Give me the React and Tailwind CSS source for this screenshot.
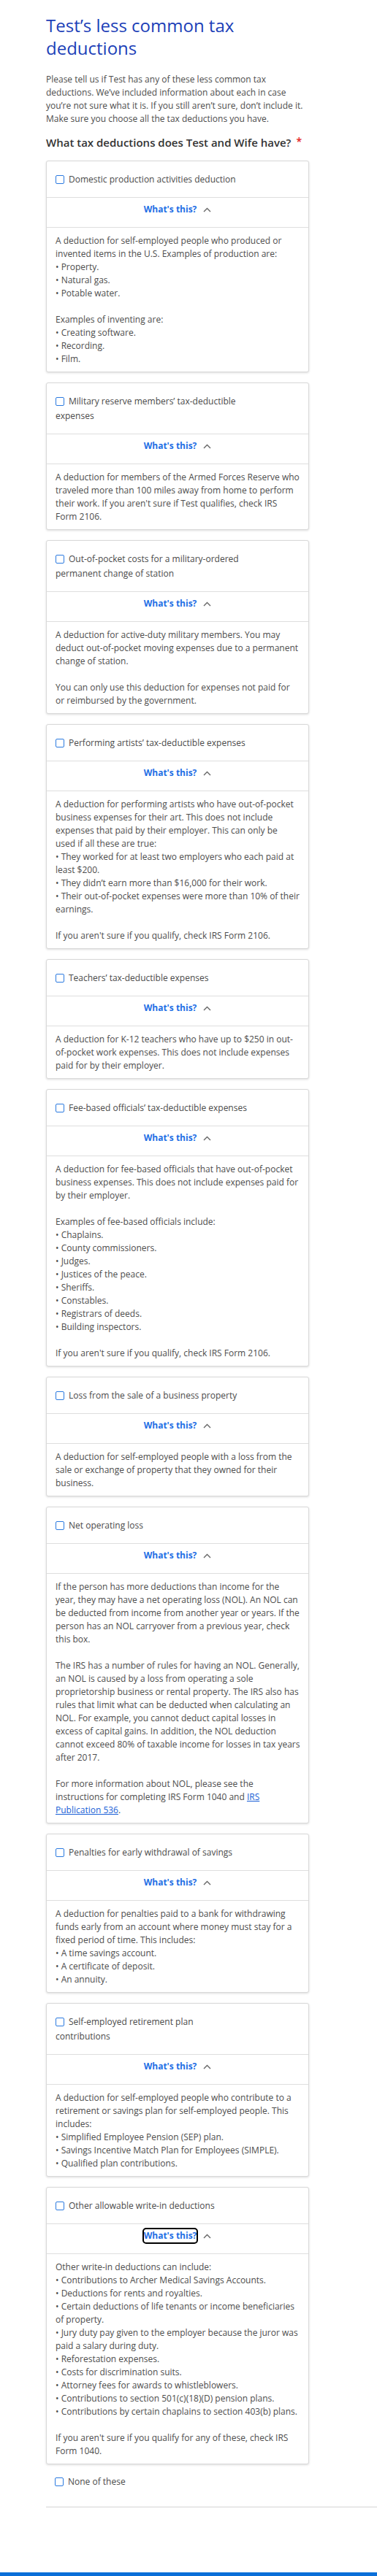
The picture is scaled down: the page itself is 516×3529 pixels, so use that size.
import React from 'react';

const deductions = [
  {
    label: 'Domestic production activities deduction',
    body: 'A deduction for self-employed people who produced or invented items in the U.S. Examples of production are:\n• Property.\n• Natural gas.\n• Potable water.\n\nExamples of inventing are:\n• Creating software.\n• Recording.\n• Film.',
  },
  {
    label: 'Military reserve members’ tax-deductible expenses',
    body: "A deduction for members of the Armed Forces Reserve who traveled more than 100 miles away from home to perform their work. If you aren't sure if Test qualifies, check IRS Form 2106.",
  },
  {
    label: 'Out-of-pocket costs for a military-ordered permanent change of station',
    body: 'A deduction for active-duty military members. You may deduct out-of-pocket moving expenses due to a permanent change of station.\n\nYou can only use this deduction for expenses not paid for or reimbursed by the government.',
  },
  {
    label: 'Performing artists’ tax-deductible expenses',
    body: "A deduction for performing artists who have out-of-pocket business expenses for their art. This does not include expenses that paid by their employer. This can only be used if all these are true:\n• They worked for at least two employers who each paid at least $200.\n• They didn’t earn more than $16,000 for their work.\n• Their out-of-pocket expenses were more than 10% of their earnings.\n\nIf you aren't sure if you qualify, check IRS Form 2106.",
  },
  {
    label: 'Teachers’ tax-deductible expenses',
    body: 'A deduction for K-12 teachers who have up to $250 in out-of-pocket work expenses. This does not include expenses paid for by their employer.',
  },
  {
    label: 'Fee-based officials’ tax-deductible expenses',
    body: "A deduction for fee-based officials that have out-of-pocket business expenses. This does not include expenses paid for by their employer.\n\nExamples of fee-based officials include:\n• Chaplains.\n• County commissioners.\n• Judges.\n• Justices of the peace.\n• Sheriffs.\n• Constables.\n• Registrars of deeds.\n• Building inspectors.\n\nIf you aren't sure if you qualify, check IRS Form 2106.",
  },
  {
    label: 'Loss from the sale of a business property',
    body: 'A deduction for self-employed people with a loss from the sale or exchange of property that they owned for their business.',
  },
  {
    label: 'Net operating loss',
    body: (
      <>
        {'If the person has more deductions than income for the year, they may have a net operating loss (NOL). An NOL can be deducted from income from another year or years. If the person has an NOL carryover from a previous year, check this box.\n\nThe IRS has a number of rules for having an NOL. Generally, an NOL is caused by a loss from operating a sole proprietorship business or rental property. The IRS also has rules that limit what can be deducted when calculating an NOL. For example, you cannot deduct capital losses in excess of capital gains. In addition, the NOL deduction '}
        <span className="whitespace-nowrap">cannot exceed 80% of taxable income for losses in tax years</span>
        {' after 2017.\n\nFor more information about NOL, please see the instructions for completing IRS Form 1040 and '}
        <span className="text-[#1a5fd6] underline">IRS Publication 536</span>.
      </>
    ),
  },
  {
    label: 'Penalties for early withdrawal of savings',
    body: 'A deduction for penalties paid to a bank for withdrawing funds early from an account where money must stay for a fixed period of time. This includes:\n• A time savings account.\n• A certificate of deposit.\n• An annuity.',
  },
  {
    label: 'Self-employed retirement plan contributions',
    body: 'A deduction for self-employed people who contribute to a retirement or savings plan for self-employed people. This includes:\n• Simplified Employee Pension (SEP) plan.\n• Savings Incentive Match Plan for Employees (SIMPLE).\n• Qualified plan contributions.',
  },
  {
    label: 'Other allowable write-in deductions',
    body: "Other write-in deductions can include:\n• Contributions to Archer Medical Savings Accounts.\n• Deductions for rents and royalties.\n• Certain deductions of life tenants or income beneficiaries of property.\n• Jury duty pay given to the employer because the juror was paid a salary during duty.\n• Reforestation expenses.\n• Costs for discrimination suits.\n• Attorney fees for awards to whistleblowers.\n• Contributions to section 501(c)(18)(D) pension plans.\n• Contributions by certain chaplains to section 403(b) plans.\n\nIf you aren't sure if you qualify for any of these, check IRS Form 1040.",
    focused: true,
  },
];

function Checkbox() {
  return (
    <span className="inline-block w-[12px] h-[12px] mr-[6px] align-[-2px] border-[1.5px] border-[#2b7ae0] rounded-[2px] bg-white" />
  );
}

function Chevron() {
  return (
    <svg width="11" height="7" viewBox="0 0 11 7" className="ml-[9px]" aria-hidden="true">
      <polyline points="1,6 5.5,1.5 10,6" fill="none" stroke="#666" strokeWidth="1.4" />
    </svg>
  );
}

function DeductionCard({ item }) {
  return (
    <div className="w-[360px] border border-[#d9d9d9] rounded-[3px] bg-white shadow-[0_1px_3px_rgba(0,0,0,0.14)]">
      <div className="px-[12px] pt-[15px] pb-[14px]">
        <div className="max-w-[264px] text-[12px] leading-[20px] text-[#4a4a4a]">
          <Checkbox />
          {item.label}
        </div>
      </div>
      <div className="border-t border-[#dedede] flex justify-center items-center pt-[7px] pb-[15px]">
        <span
          className={
            item.focused
              ? 'text-[12px] leading-[18px] font-bold text-[#1f6fe5] outline-2 outline-black rounded-[3px]'
              : 'text-[12px] leading-[18px] font-bold text-[#1f6fe5]'
          }
        >
          What's this?
        </span>
        <Chevron />
      </div>
      <div className="border-t border-[#dedede] px-[12px] pt-[9px] pb-[8px] text-[12px] leading-[18px] text-[#4d4d4d] whitespace-pre-line">
        {item.body}
      </div>
    </div>
  );
}

export default function App() {
  return (
    <div className="min-h-[3529px] bg-white font-['Open_Sans',sans-serif] flex flex-col">
      <div className="pl-[63px] pt-[19px]">
        <h1 className="w-[360px] text-[24px] leading-[31px] font-normal text-[#1c3fb8]">
          Test’s less common tax deductions
        </h1>
        <p className="w-[360px] mt-[19px] text-[12px] leading-[18px] text-[#4d4d4d]">
          Please tell us if Test has any of these less common tax deductions. We’ve included information about each in case you’re not sure what it is. If you still aren’t sure, don’t include it. Make sure you choose all the tax deductions you have.
        </p>
        <h2 className="mt-[12px] text-[15px] leading-[20px] font-semibold text-[#333]">
          What tax deductions does Test and Wife have?
          <span className="ml-[7px] text-[#e41b1b] text-[14px] align-[2px]">*</span>
        </h2>
        <div className="mt-[15px] flex flex-col gap-[14px]">
          {deductions.map((item) => (
            <DeductionCard key={item.label} item={item} />
          ))}
        </div>
        <div className="mt-[14px] pl-[12px] text-[12px] leading-[20px] text-[#4a4a4a]">
          <Checkbox />
          None of these
        </div>
        <div className="mt-[24px] border-t border-[#d4d4d4]" />
      </div>
      <div className="flex-1" />
      <div className="h-[5px] bg-[#0b6fd9]" />
    </div>
  );
}
